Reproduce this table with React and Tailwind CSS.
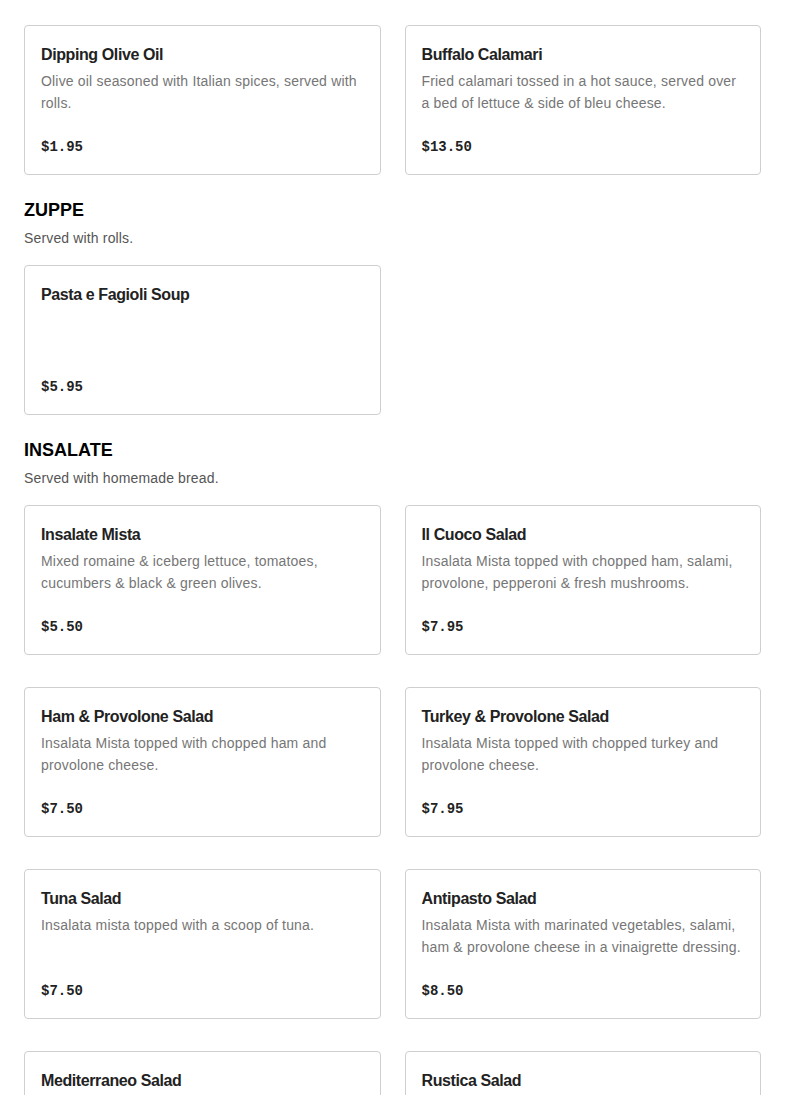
const sections = [
    {
        items: [
            { name: 'Dipping Olive Oil', desc: 'Olive oil seasoned with Italian spices, served with rolls.', price: '$1.95' },
            { name: 'Buffalo Calamari', desc: 'Fried calamari tossed in a hot sauce, served over a bed of lettuce & side of bleu cheese.', price: '$13.50' },
        ],
    },
    {
        title: 'ZUPPE',
        note: 'Served with rolls.',
        items: [{ name: 'Pasta e Fagioli Soup', desc: '', price: '$5.95' }],
    },
    {
        title: 'INSALATE',
        note: 'Served with homemade bread.',
        items: [
            { name: 'Insalate Mista', desc: 'Mixed romaine & iceberg lettuce, tomatoes, cucumbers & black & green olives.', price: '$5.50' },
            { name: 'Il Cuoco Salad', desc: 'Insalata Mista topped with chopped ham, salami, provolone, pepperoni & fresh mushrooms.', price: '$7.95' },
            { name: 'Ham & Provolone Salad', desc: 'Insalata Mista topped with chopped ham and provolone cheese.', price: '$7.50' },
            { name: 'Turkey & Provolone Salad', desc: 'Insalata Mista topped with chopped turkey and provolone cheese.', price: '$7.95' },
            { name: 'Tuna Salad', desc: 'Insalata mista topped with a scoop of tuna.', price: '$7.50' },
            { name: 'Antipasto Salad', desc: 'Insalata Mista with marinated vegetables, salami, ham & provolone cheese in a vinaigrette dressing.', price: '$8.50' },
            { name: 'Mediterraneo Salad', desc: 'Insalata Mista with feta cheese, kalamata olives & pepperoncini.', price: '$8.50' },
            { name: 'Rustica Salad', desc: 'Insalata Mista topped with grilled chicken & fresh mozzarella.', price: '$9.50' },
        ],
    },
];

const MenuCard = ({ item }) => (
    <div className="h-[150px] flex flex-col border border-[#cfcfcf] rounded-[4px] bg-white px-4 pt-[17px] pb-[17px]">
        <h3 className="text-[16px] leading-6 font-semibold tracking-[-0.4px] text-[#222]">{item.name}</h3>
        {item.desc && (
            <p className="mt-[3px] text-[14px] leading-[22px] tracking-[0.18px] text-[#767676]">{item.desc}</p>
        )}
        <div className="mt-auto font-['Liberation_Mono',monospace] font-bold text-[14px] leading-5 text-[#222]">
            {item.price}
        </div>
    </div>
);

export default function App() {
    return (
        <div className="min-h-screen bg-white px-6 pt-[25px] pb-10 font-['Liberation_Sans',Arial,sans-serif]">
            {sections.map((section, i) => (
                <section key={i} className={i > 0 ? 'mt-[21px]' : ''}>
                    {section.title && (
                        <div className="mb-[17px]">
                            <h2 className="text-[18px] leading-7 font-black text-black">{section.title}</h2>
                            <p className="mt-1 text-[14px] leading-5 tracking-[0.15px] text-[#555]">{section.note}</p>
                        </div>
                    )}
                    <div className="grid grid-cols-2 gap-x-6 gap-y-8">
                        {section.items.map((item) => (
                            <MenuCard key={item.name} item={item} />
                        ))}
                    </div>
                </section>
            ))}
        </div>
    );
}
